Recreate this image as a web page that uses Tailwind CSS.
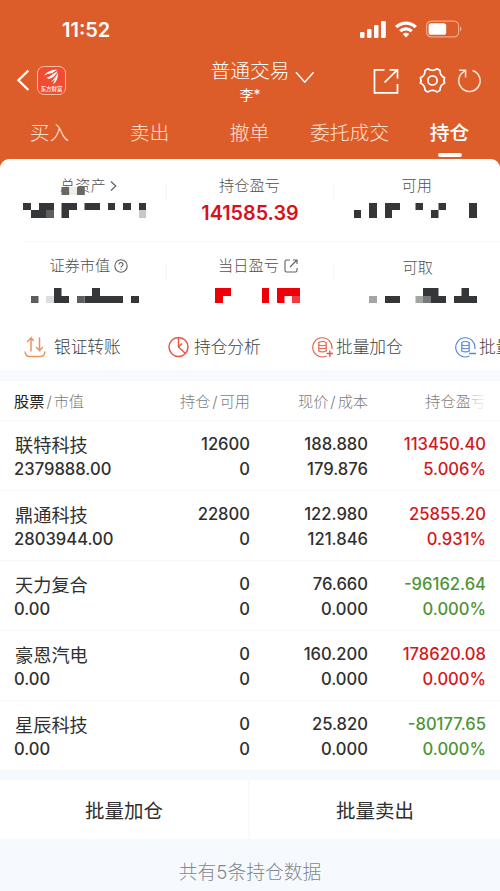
<!DOCTYPE html>
<html lang="zh-CN">
  <head>
    <meta charset="UTF-8" />
    <meta name="viewport" content="width=device-width, initial-scale=1.0" />
    <title>普通交易 - 持仓</title>
    <script src="https://cdn.jsdelivr.net/npm/@tailwindcss/browser@4"></script>
  </head>
  <body
    class="w-[500px] h-[891px] overflow-hidden bg-[#f6faff] font-['Inter','Noto_Sans_CJK_SC',sans-serif] text-[#303030]"
  >
    <!-- Header -->
    <header class="h-[170px] bg-[#dc5d2a] text-white">
      <!-- Status bar -->
      <div class="h-[60px] flex items-center justify-between pl-[62px] pr-[38px]">
        <span class="text-[20px] font-semibold">11:52</span>
        <div class="flex items-center gap-[9px] pb-[2px]">
          <svg class="w-[26px] h-[17px]" viewBox="0 0 26 17" fill="#fff">
            <rect x="0" y="11" width="4.5" height="6" rx="1.2" />
            <rect x="7" y="8" width="4.5" height="9" rx="1.2" />
            <rect x="14" y="4" width="4.5" height="13" rx="1.2" />
            <rect x="21" y="0" width="4.8" height="17" rx="1.2" />
          </svg>
          <svg class="w-[22px] h-[17px]" viewBox="0 0 22 17" fill="none" stroke="#fff" stroke-width="3.2">
            <path d="M1.2 6.2 A13.8 13.8 0 0 1 20.8 6.2" />
            <path d="M5.2 10.2 A8.2 8.2 0 0 1 16.8 10.2" />
            <path d="M11 16.4 L7.8 13.1 A4.6 4.6 0 0 1 14.2 13.1 Z" fill="#fff" stroke="none" />
          </svg>
          <svg class="w-[36px] h-[18px]" viewBox="0 0 36 18">
            <rect x="0.6" y="1.2" width="32" height="15.6" rx="4.6" fill="none" stroke="#f3a78b" stroke-width="1.2" />
            <rect x="2.6" y="3.2" width="17.6" height="11.6" rx="2.6" fill="#fff" />
            <path d="M34 6.5 C36 7.5 36 10.5 34 11.5 Z" fill="#f3a78b" />
          </svg>
        </div>
      </div>

      <!-- Title bar -->
      <div class="h-[50px] grid grid-cols-[140px_1fr_140px]">
        <div class="flex items-start pl-[16px] pt-[5px] gap-[7px]">
          <svg class="w-[14px] h-[30px]" viewBox="0 0 14 30" fill="none" stroke="#fff" stroke-width="2.3">
            <path d="M12.4 5.5 L2.4 15.3 L12.4 25" />
          </svg>
          <div
            class="mt-px w-[29px] h-[29px] rounded-[7px] border border-[#ffc2a0] bg-[#f04b33] flex flex-col items-center overflow-hidden"
          >
            <svg class="w-[15px] h-[17px] mt-[2px] shrink-0" viewBox="0 0 15 17" fill="#fff">
              <path d="M0 6.6 C3 2.6 8 .6 13.8 .8 C11 2 9.4 3 8.3 4.2 C5.5 4 2.7 5 0 6.6 Z" />
              <path d="M2.5 8.8 C6 7.8 9 4.6 13.8 2 C12.2 4.6 10.5 8.5 5 10 Z" />
              <path d="M13.8 3.5 C14.2 8 13 12.8 8.6 15.6 C10.6 12.4 11 9.2 13.8 3.5 Z" />
              <path d="M13 5.5 C11.6 9.5 10 12 6.5 13.2 C9 10.8 11 9 13 5.5 Z" />
            </svg>
            <span class="text-[5.4px] leading-[6px] font-medium whitespace-nowrap">东方财富</span>
          </div>
        </div>
        <div class="relative">
          <div class="text-center text-[19.8px] leading-[23px] font-light">普通交易</div>
          <div class="text-center text-[14px] leading-[20px] pt-[2px]">李*</div>
          <svg class="absolute left-[155px] top-[10px] w-[20px] h-[14px]" viewBox="0 0 20 14" fill="none" stroke="#fff" stroke-width="1.5">
            <path d="M1 2.2 L9.8 12.2 L18.6 2.2" />
          </svg>
        </div>
        <div class="flex items-start pt-[7px] pl-[12px]">
          <svg class="w-[27px] h-[28px]" viewBox="0 0 27 28" fill="none" stroke="#fff" stroke-width="1.7">
            <path d="M12.5 2.8 H2.5 V25.8 H25.5 V17" />
            <path d="M12.5 15.5 L25.3 2.8 M17.5 2.8 H25.5 V11.5" />
          </svg>
          <svg class="ml-[19px] w-[28px] h-[28px]" viewBox="0 0 28 28" fill="none" stroke="#fff" stroke-width="1.7" stroke-linejoin="round">
            <path d="M9.8 1.8 Q14.5 5 19.2 1.8 L22 3.5 Q21.8 8.6 26.6 10.8 Q25.2 13.4 26.6 16 Q21.8 18.2 22 23.3 L19.2 25 Q14.5 21.8 9.8 25 L7 23.3 Q7.2 18.2 2.4 16 Q3.8 13.4 2.4 10.8 Q7.2 8.6 7 3.5 Z" />
            <circle cx="14.5" cy="13.4" r="4.6" />
          </svg>
          <svg class="ml-[10px] w-[26px] h-[28px]" viewBox="0 0 26 28" fill="none" stroke="#ffe6d8" stroke-width="1.5">
            <path d="M16.5 3.5 A10.7 10.7 0 1 1 8.8 4.1" />
            <path d="M3 3.2 H9.6 V10.5" />
          </svg>
        </div>
      </div>

      <!-- Tabs -->
      <nav class="h-[49px] grid grid-cols-5 text-center text-[19.8px] leading-[47px] font-light text-[#ffe0cf] whitespace-nowrap">
        <span class="-ml-px">买入</span>
        <span class="-ml-px">卖出</span>
        <span class="-ml-px">撤单</span>
        <span class="-ml-px">委托成交</span>
        <span class="relative -ml-px font-medium text-white">
          持仓
          <i class="absolute left-[39px] top-[43px] w-[24px] h-[4px] rounded-full bg-white"></i>
        </span>
      </nav>
    </header>

    <!-- Account summary -->
    <section class="relative -mt-[11px] h-[211px] bg-white rounded-t-[9px] text-[15.2px] text-[#505050]">
      <div class="grid grid-cols-3 h-[82px] leading-[20px] text-center font-light">
        <div class="pt-[17px] pl-[10px]">
          <span class="inline-flex items-center">总资产<svg class="ml-[4px] w-[7px] h-[12px]" viewBox="0 0 7 12" fill="none" stroke="#606060" stroke-width="1.2"><path d="M1 1.5 L5.8 6 L1 10.5" /></svg></span>
        </div>
        <div class="pt-[17px]">
          <div class="-ml-px">持仓盈亏</div>
          <div class="mt-[5px] text-[19.8px] leading-[24px] font-semibold text-[#d9101c]">141585.39</div>
        </div>
        <div class="pt-[17px]">可用</div>
      </div>
      <div class="ml-[24px] border-t border-[#f8f8f8]"></div>
      <div class="grid grid-cols-3 h-[82px] leading-[20px] text-center font-light">
        <div class="pt-[14px] pl-[11px]">
          <span class="inline-flex items-center">证券市值<svg class="ml-[4px] w-[14px] h-[14px]" viewBox="0 0 14 14" fill="none" stroke="#606060" stroke-width="1.1"><circle cx="7" cy="7" r="6.2" /><path d="M5 5.6 C5 2.8 9 2.9 9 5.4 C9 6.8 7 6.9 7 8.6 M7 9.7 V10.8" /></svg></span>
        </div>
        <div class="pt-[14px] pl-[16px]">
          <span class="inline-flex items-center">当日盈亏<svg class="ml-[5px] w-[14px] h-[14px]" viewBox="0 0 14 14" fill="none" stroke="#606060" stroke-width="1.1"><path d="M6 1 H2.5 Q1 1 1 2.5 V11.5 Q1 13 2.5 13 H11.5 Q13 13 13 11.5 V9 M6 8 L13 1 M9 1 H13 V5" /></svg></span>
        </div>
        <div class="pt-[16px] pl-[2px]">可取</div>
      </div>

      <!-- Masked amounts and column dividers -->
      <svg class="absolute left-0 top-0 w-[500px] h-[160px]" viewBox="0 159 500 160" fill="#343637">
        <path d="M166.5 184 V200 M333.5 184 V200 M166.5 264 V280 M333.5 264 V280" stroke="#f6f6f6" />
        <path d="M61.5 187h7.8v8h-7.8z M77 187h7.8v8h-7.8z" fill="#686865" />
        <path d="M69.3 187h7.7v8h-7.7z" fill="#eeede8" />
        <path d="M23 203h8v7h-8z M39 203h15v15h-23v-8h8z M61.5 203h15.5v7h-8v8h-7.5z M84.5 203h15.5v7h-15.5z M108 203h7v7h-7z M123 203h8v7h-8z M139 203h7v7h-7z" />
        <path d="M46 210h8v8h-8z" fill="#5c5e60" />
        <path d="M139 210h7v8h-7z" fill="#c8c8c8" />
        <path d="M354 210h7v8h-7z M369 203h8v15h-8z M385 203h15v7h-8v8h-7z M415.5 203h7.5v7h-7.5z M438.5 203h7.5v7h-7.5z M431 210h7.5v8h-7.5z M469 203h8v15h-8z" />
        <path d="M54 288h7.5v8h7.5v7h-15z M84.5 296h7.5v-8h8v8h23v7h-38.5z M131 296h8v7h-8z" />
        <path d="M31 296h7.5v7h-7.5z M77 296h7.5v7h-7.5z" fill="#5c5e60" />
        <path d="M46 296h8v7h-8z" fill="#dedede" />
        <path d="M215 288h16v8h-8v7h-8z M262 288h7v15h-7z M277 288h23v8h-15.5v7h-7.5z" fill="#ed0008" />
        <path d="M292 296h8v7h-8z" fill="#f23b40" />
        <path d="M385 296h15v7h-15z M423 288h15.5v8h7.5v7h-15v-7h-8z M454 296h7.5v-8h7.5v8h8v7h-23z" />
        <path d="M369 296h8v7h-8z M415.5 296h7.5v7h-7.5z" fill="#a3a6a2" />
        <path d="M423 296h8v7h-8z" fill="#777a7a" />
      </svg>

      <!-- Shortcuts -->
      <div class="flex items-center h-[46px] pt-px text-[16.7px] font-light text-[#404040] whitespace-nowrap overflow-hidden">
        <div class="w-[168px] shrink-0 flex items-center pl-[24px] gap-[8px]">
          <svg class="w-[22px] h-[22px]" viewBox="0 0 22 22" fill="none" stroke="#e89560" stroke-width="1.5" stroke-linecap="round">
            <path d="M1.2 16 Q1.5 20.5 5.5 20.5 H16.5 Q20.5 20.5 20.8 16" />
            <path d="M7 15 V2 L3.5 5.5 M7 2 L9.5 4.5 M15.5 2 V14.5 L12.5 11.5 M15.5 14.5 L18.5 11.5" />
          </svg>
          <span>银证转账</span>
        </div>
        <div class="w-[144px] shrink-0 flex items-center gap-[5px]">
          <svg class="w-[21px] h-[22px]" viewBox="0 0 21 22" fill="none" stroke="#e65a45" stroke-width="1.5">
            <circle cx="10.5" cy="11" r="9.5" />
            <path d="M10.5 1.5 V11 L17.5 17.5 M10.5 11 L14 7.5" />
          </svg>
          <span>持仓分析</span>
        </div>
        <div class="w-[143px] shrink-0 flex items-center gap-[2px]">
          <svg class="w-[22px] h-[22px]" viewBox="0 0 22 22" fill="none" stroke="#e2604b" stroke-width="1.2">
            <path d="M14.5 20 A9.6 9.6 0 1 1 19.8 13" />
            <path d="M6.8 6.5 Q10.5 4.5 14.2 6.5 V15 Q10.5 16.8 6.8 15 Z M6.8 9 Q10.5 10.5 14.2 9 M6.8 12 Q10.5 13.5 14.2 12" />
            <path d="M14.5 17.5 H21 M17.8 14.5 V20.8" stroke-width="1.5" />
          </svg>
          <span>批量加仓</span>
        </div>
        <div class="shrink-0 flex items-center gap-[2px]">
          <svg class="w-[22px] h-[22px]" viewBox="0 0 22 22" fill="none" stroke="#5288d8" stroke-width="1.2">
            <path d="M14.5 20 A9.6 9.6 0 1 1 19.8 13" />
            <path d="M6.8 6.5 Q10.5 4.5 14.2 6.5 V15 Q10.5 16.8 6.8 15 Z M6.8 9 Q10.5 10.5 14.2 9 M6.8 12 Q10.5 13.5 14.2 12" />
            <path d="M14 17.5 H21" stroke-width="1.5" />
          </svg>
          <span>批量卖出</span>
        </div>
      </div>
    </section>

    <!-- Positions table -->
    <section class="mt-[11px] bg-white">
      <div class="relative h-[40px] pt-[3px] px-[14px] grid grid-cols-[116px_120px_118px_118px] items-center text-right text-[15.2px] font-light text-[#7c7c7c] border-b border-[#f8f8f8] whitespace-nowrap">
        <span class="text-left"><b class="font-normal text-[#222]">股票</b><span class="px-[2px]">/</span>市值</span>
        <span>持仓<span class="px-[2px]">/</span>可用</span>
        <span>现价<span class="px-[2px]">/</span>成本</span>
        <span>持仓盈亏</span>
        <i class="absolute right-0 top-0 w-[31px] h-[38px] bg-linear-to-r from-white/40 to-white to-60%"></i>
      </div>
      <div id="positions"></div>
    </section>

    <!-- Batch actions -->
    <div class="mt-[9px] h-[59px] grid grid-cols-2 bg-white text-center text-[19.5px] leading-[62px]">
      <span class="border-r-2 border-[#f8fafc]">批量加仓</span>
      <span>批量卖出</span>
    </div>
    <footer class="pt-[20px] text-center text-[18.8px] leading-[28px] font-light text-[#85898d]">共有5条持仓数据</footer>

    <script>
      const positions = [
        ["联特科技", "2379888.00", "12600", "0", "188.880", "179.876", "113450.40", "5.006%", "up"],
        ["鼎通科技", "2803944.00", "22800", "0", "122.980", "121.846", "25855.20", "0.931%", "up"],
        ["天力复合", "0.00", "0", "0", "76.660", "0.000", "-96162.64", "0.000%", "down"],
        ["豪恩汽电", "0.00", "0", "0", "160.200", "0.000", "178620.08", "0.000%", "up"],
        ["星辰科技", "0.00", "0", "0", "25.820", "0.000", "-80177.65", "0.000%", "down"],
      ];

      document.getElementById("positions").innerHTML = positions
        .map(([name, value, held, free, price, cost, profit, rate, trend]) => {
          const color = trend === "up" ? "text-[#d31820]" : "text-[#4f9434]";
          return `
          <div class="h-[70px] pt-[11px] px-[14px] grid grid-cols-[116px_120px_118px_118px] text-right text-[16.6px] leading-[25px] font-medium border-b border-[#f8f8f8]">
            <div class="text-left"><p class="h-[25px] pl-px text-[18.2px] leading-[27px] font-normal">${name}</p><p>${value}</p></div>
            <div><p>${held}</p><p>${free}</p></div>
            <div><p>${price}</p><p>${cost}</p></div>
            <div class="${color}"><p>${profit}</p><p>${rate}</p></div>
          </div>`;
        })
        .join("");
    </script>
  </body>
</html>
